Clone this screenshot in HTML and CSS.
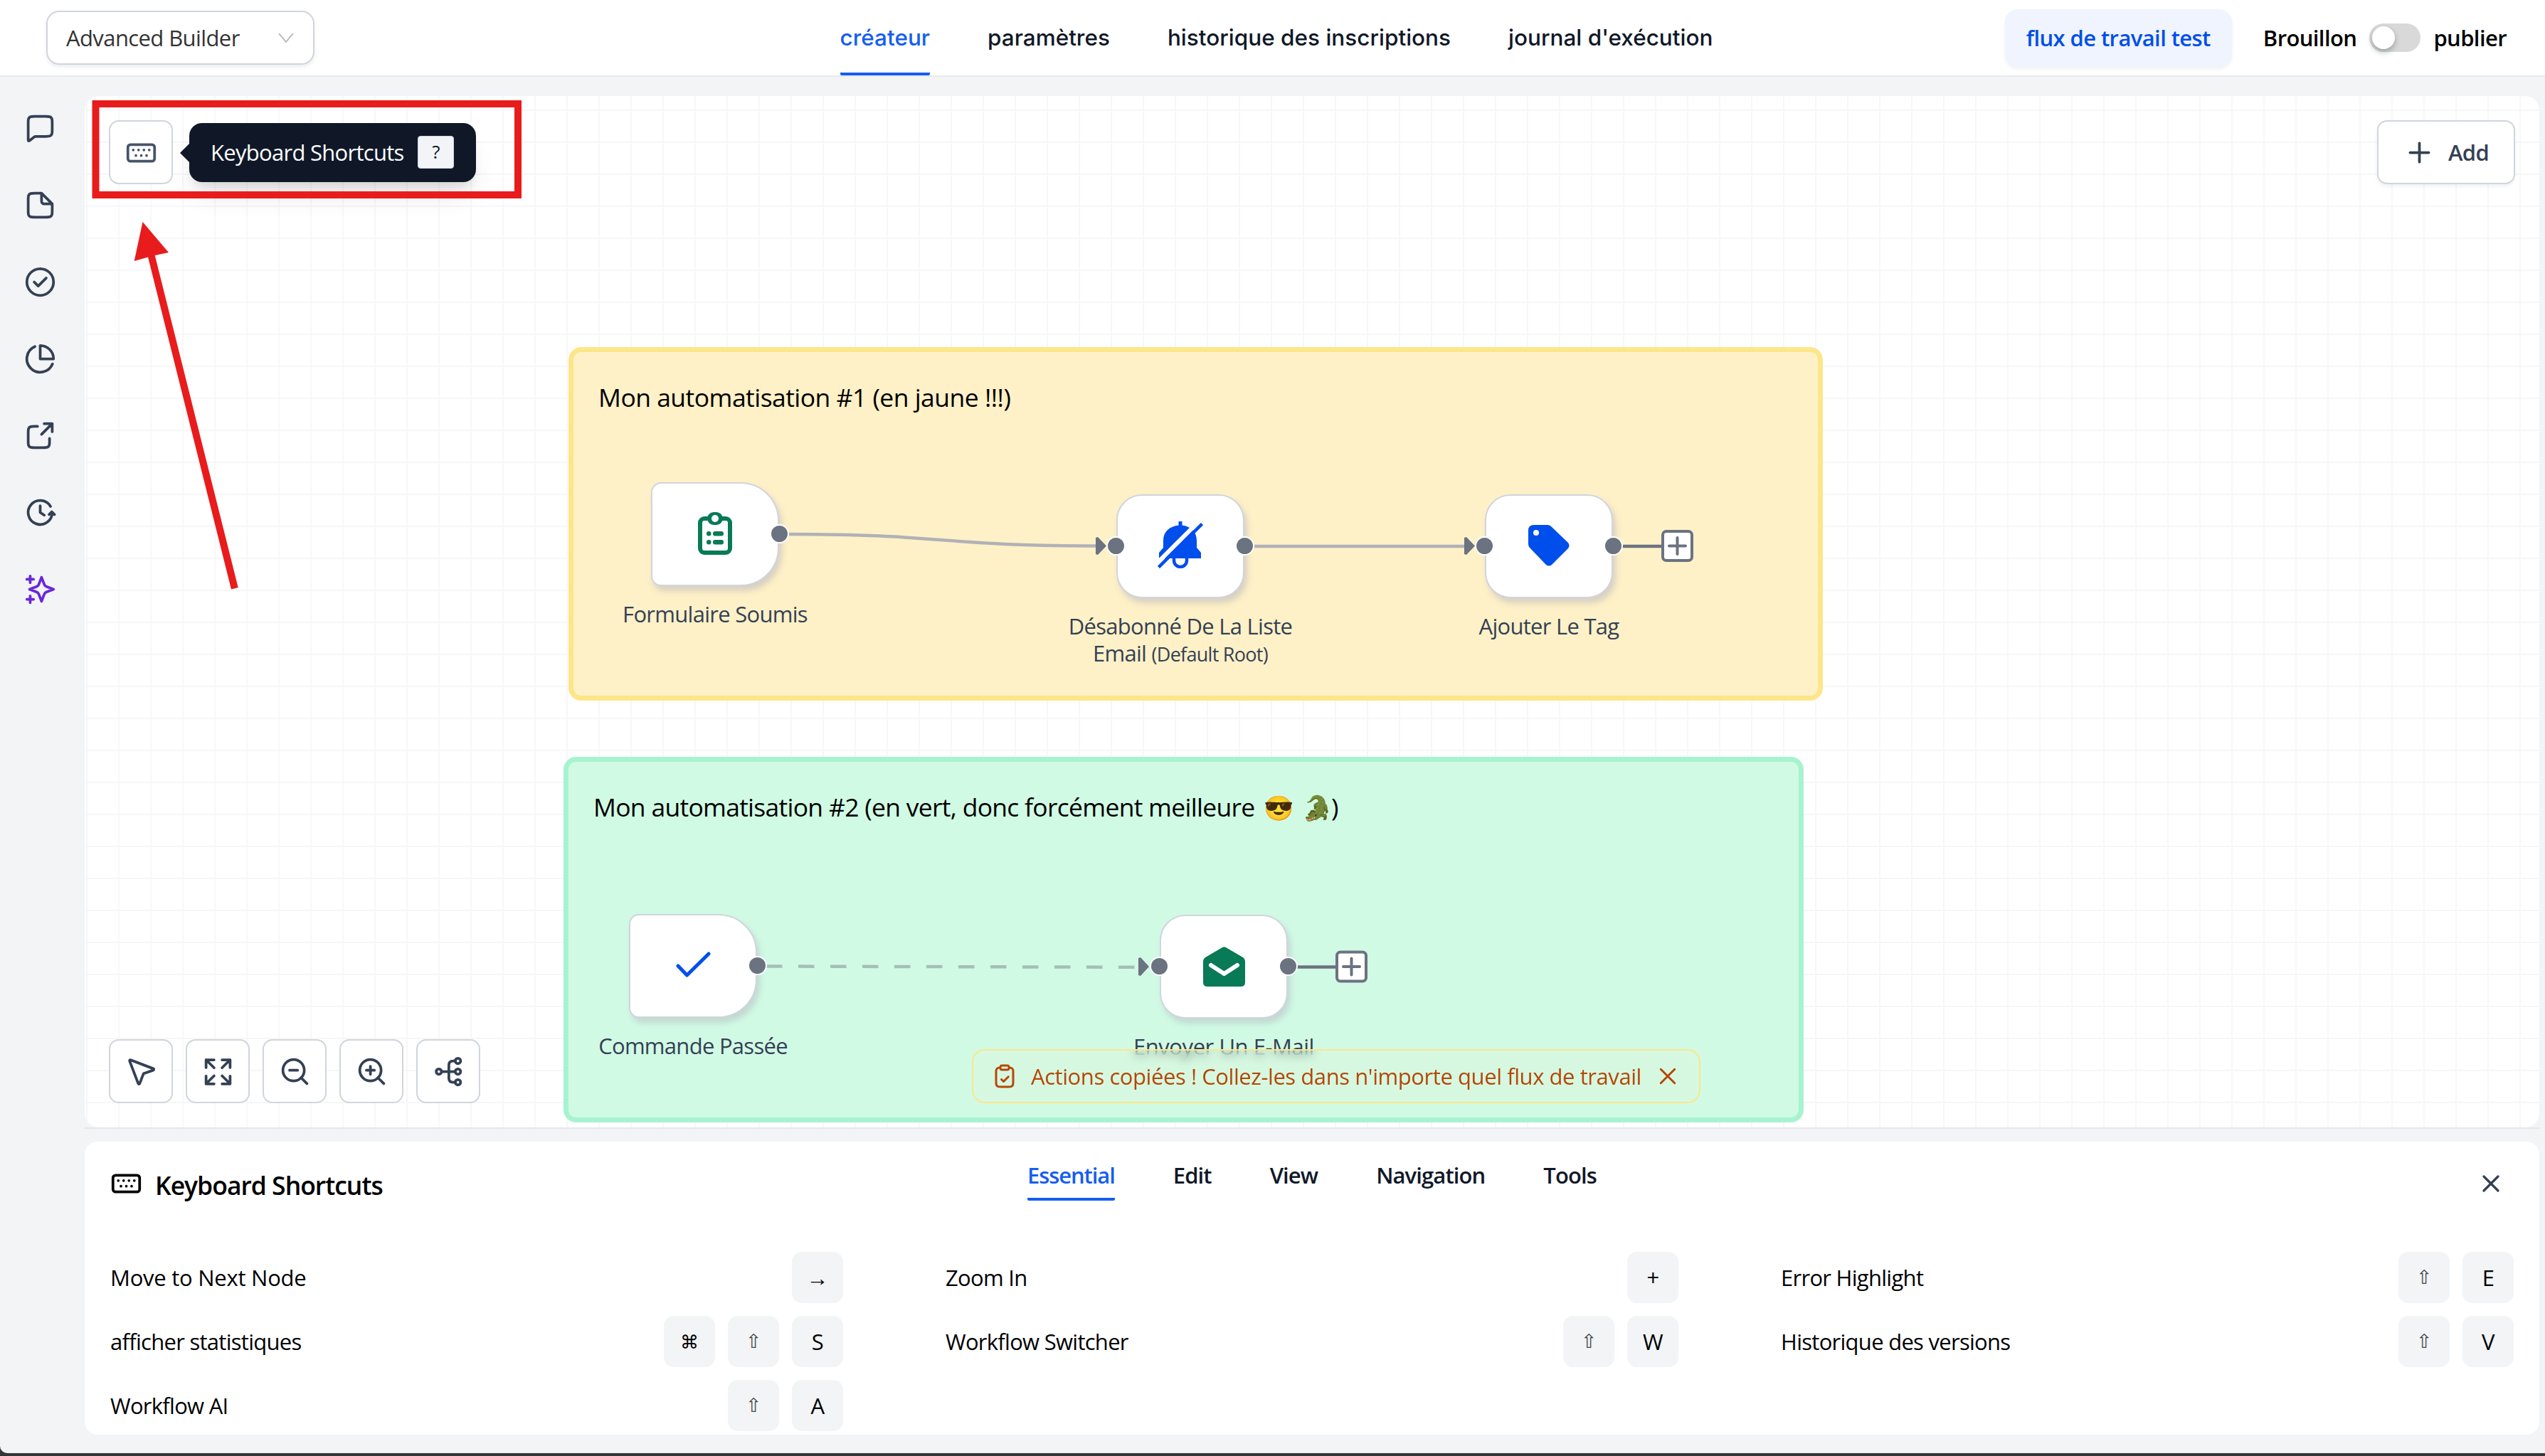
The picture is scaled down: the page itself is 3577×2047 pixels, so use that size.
FILE: index.html
```
<!DOCTYPE html>
<html lang="fr">
	<head>
		<meta charset="UTF-8" />
		<meta name="viewport" content="width=device-width, initial-scale=1.0" />
		<title>Advanced Builder</title>
		<link rel="stylesheet" href="styles.css">
	</head>
	<body>
		<div class="app">
			<header class="topbar">
				<div class="select">
					<span>Advanced Builder</span>
					<svg class="chevron" viewBox="0 0 24 14"><path d="M2 1l10 12L22 1" /></svg>
				</div>
				<nav class="tabs">
					<a class="tab active">créateur</a>
					<a class="tab">paramètres</a>
					<a class="tab">historique des inscriptions</a>
					<a class="tab">journal d'exécution</a>
				</nav>
				<div class="actions">
					<button class="test-btn">flux de travail test</button>
					<span class="state">Brouillon</span>
					<span class="toggle"></span>
					<span class="state">publier</span>
				</div>
			</header>

			<div class="layout">
				<aside class="sidebar">
					<svg class="icon" viewBox="0 0 24 24"><path d="M3 7.8c0-1.68 0-2.52.327-3.162a3 3 0 0 1 1.311-1.311C5.28 3 6.12 3 7.8 3h8.4c1.68 0 2.52 0 3.162.327a3 3 0 0 1 1.311 1.311C21 5.28 21 6.12 21 7.8v5.4c0 1.68 0 2.52-.327 3.162a3 3 0 0 1-1.311 1.311C18.72 18 17.88 18 16.2 18H9.684c-.624 0-.936 0-1.235.061a3 3 0 0 0-.74.26c-.273.138-.516.333-1.004.723l-2.385 1.908c-.416.333-.624.499-.799.5a.5.5 0 0 1-.392-.189C3 21.126 3 20.86 3 20.327z" /></svg>
					<svg class="icon" viewBox="0 0 24 24"><path d="M13 3H7.800C6.120 3 5.280 3 4.638 3.327a3 3 0 0 0-1.311 1.311C3 5.280 3 6.120 3 7.800v8.400c0 1.680 0 2.520.327 3.162a3 3 0 0 0 1.311 1.311C5.280 21 6.120 21 7.800 21h8.400c1.680 0 2.520 0 3.162-.327a3 3 0 0 0 1.311-1.311C21 18.720 21 17.880 21 16.200V11zM13 3v4.800c0 1.120 0 1.680.218 2.108a2 2 0 0 0 .874.874C14.520 11 15.080 11 16.200 11H21z" /></svg>
					<svg class="icon" viewBox="0 0 24 24"><circle cx="12" cy="12" r="10" /><path d="M7.500 12l3 3 6-6" /></svg>
					<svg class="icon" viewBox="0 0 24 24"><path d="M21.210 15.890A10 10 0 1 1 8 2.830M22 12A10 10 0 0 0 12 2v10z" /></svg>
					<svg class="icon" viewBox="0 0 24 24"><path d="M21 9V3h-6M21 3l-8 8M10 5H7.800C6.120 5 5.280 5 4.638 5.327a3 3 0 0 0-1.311 1.311C3 7.280 3 8.120 3 9.800v6.400c0 1.680 0 2.520.327 3.162a3 3 0 0 0 1.311 1.311C5.280 21 6.120 21 7.800 21h6.400c1.680 0 2.520 0 3.162-.327a3 3 0 0 0 1.311-1.311C19 18.720 19 17.880 19 16.200V14" /></svg>
					<svg class="icon" viewBox="0 0 24 24"><path d="M22.700 13.500l-2-2-2 2M21 12a9 9 0 1 1-1.250-4.570M12 7v5l3 2" /></svg>
					<svg class="icon ai" viewBox="0 0 24 24"><path d="M4.500 22v-5M4.500 7V2M2 4.500h5M2 19.500h5M13 3l-1.734 4.509c-.282.733-.423 1.100-.643 1.408a3 3 0 0 1-.706.706c-.308.220-.675.361-1.408.643L4 12l4.509 1.734c.733.282 1.100.423 1.408.643a3 3 0 0 1 .706.706c.220.308.361.675.643 1.408L13 21l1.734-4.509c.282-.733.423-1.100.643-1.408a3 3 0 0 1 .706-.706c.308-.220.675-.361 1.408-.643L22 12l-4.509-1.734c-.733-.282-1.100-.423-1.408-.643a3 3 0 0 1-.706-.706c-.220-.308-.361-.675-.643-1.408z" /></svg>
				</aside>

				<main class="content">
					<div class="canvas-wrap">
						<div class="canvas">
							<div class="group yellow">Mon automatisation #1 (en jaune !!!)</div>
							<div class="group green">Mon automatisation #2 (en vert, donc forcément meilleure <span class="emoji">😎</span> <span class="emoji">🐊</span>)</div>

							<svg class="edges" viewBox="119 135 3450 1450">
								<path class="edge on-yellow" d="M1109 751C1325 751 1325 767.500 1541 767.500" />
								<path class="edge on-yellow" d="M1762 768H2060" />
								<path class="edge on-green" d="M1077 1358.500L1600 1359.800" />
								<path class="head" d="M1540 756l3-1 12 12.500-12 12.500-3-1z" />
								<path class="head" d="M2058 756l3-1 12 12.500-12 12.500-3-1z" />
								<path class="head" d="M1600 1347l3-1 12 13-12 13-3-1z" />
								<path class="stub" d="M2278 768h58M1822 1359.500h56" />
								<g class="add-node">
									<rect x="2337" y="747" width="41" height="41" rx="5" />
									<path d="M2346 767.500h23M2357.500 756v23" />
									<rect x="1879" y="1338.500" width="41" height="41" rx="5" />
									<path d="M1888 1359h23M1899.500 1347.500v23" />
								</g>
							</svg>

							<div class="node form">
								<div class="box trigger">
									<svg class="form-icon" viewBox="0 0 48 60">
										<rect class="frame" x="3" y="9" width="42" height="48" rx="6" />
										<rect x="13" y="0" width="22" height="18" rx="9" />
										<circle class="hole" cx="24" cy="9" r="5" />
										<rect x="12" y="27" width="6.500" height="6.500" rx="3" /><rect x="21" y="27" width="15" height="6.500" rx="3" />
										<rect x="12" y="39" width="6.500" height="6.500" rx="3" /><rect x="21" y="39" width="15" height="6.500" rx="3" />
									</svg>
									<i class="handle out"></i>
								</div>
								<div class="label">Formulaire Soumis</div>
							</div>
							<div class="node unsub">
								<div class="box">
									<svg class="bell-icon" viewBox="0 0 64 66">
										<path d="M29.500 0h5v5.500C46 7 55 14 55 27v10l6 7v8H2v-8l6-7V27C8 14 17 7 29.500 5.500z" />
										<path class="clapper" d="M23 52v3a9 9 0 0 0 18 0v-3" />
										<path class="gap" d="M54 4L-2 60" />
										<path class="slash" d="M62.500 3.500L1.500 64.500" />
									</svg>
									<i class="handle in"></i>
									<i class="handle out"></i>
								</div>
								<div class="label">Désabonné De La Liste<br>Email <small>(Default Root)</small></div>
							</div>
							<div class="node tag">
								<div class="box">
									<svg class="tag-icon" viewBox="0 0 58 58">
										<path d="M8 0h19q3 0 5 2l24 23q3 4 0 8L33 56q-4 3-8 0L2 32q-2-2-2-5V8q0-8 8-8z" />
										<circle class="hole" cx="11" cy="11" r="4" />
									</svg>
									<i class="handle in"></i>
									<i class="handle out"></i>
								</div>
								<div class="label">Ajouter Le Tag</div>
							</div>
							<div class="node order">
								<div class="box trigger">
									<svg class="check-icon" viewBox="0 0 49 38"><path d="M3 20l12.500 13L46 3" /></svg>
									<i class="handle out"></i>
								</div>
								<div class="label">Commande Passée</div>
							</div>
							<div class="node email">
								<div class="box">
									<svg class="mail-icon" viewBox="0 0 59 56">
										<path d="M27 1q2.500-1.500 5 0l24 14q3 2 3 5v30q0 6-6 6H6q-6 0-6-6V20q0-3 3-5z" />
										<path class="flap" d="M11 26l18.500 12L48 26" />
									</svg>
									<i class="handle in"></i>
									<i class="handle out"></i>
								</div>
								<div class="label">Envoyer Un E-Mail</div>
							</div>

							<div class="toast">
								<svg class="icon" viewBox="0 0 24 24"><path d="M16 4c.930 0 1.395 0 1.777.102a3 3 0 0 1 2.121 2.121C20 6.605 20 7.070 20 8v9.200c0 1.680 0 2.520-.327 3.162a3 3 0 0 1-1.311 1.311C17.720 22 16.880 22 15.200 22H8.800c-1.680 0-2.520 0-3.162-.327a3 3 0 0 1-1.311-1.311C4 19.720 4 18.880 4 17.200V8c0-.930 0-1.395.102-1.777a3 3 0 0 1 2.121-2.121C6.605 4 7.070 4 8 4M9 15l2 2 4.500-4.500M9.600 6h4.800c.900 0 1.600 0 1.600-1.600V3.600C16 2 15.300 2 14.400 2H9.600C8.700 2 8 2 8 3.600v.8C8 6 8.700 6 9.600 6z" /></svg>
								<span>Actions copiées ! Collez-les dans n'importe quel flux de travail</span>
								<svg class="icon" viewBox="0 0 24 24"><path d="M18.500 5.500l-13 13M5.500 5.500l13 13" /></svg>
							</div>

							<div class="tools top">
								<button class="tool">
									<svg class="icon kb" viewBox="0 0 24 24"><rect x="2" y="6" width="20" height="12.500" rx="2" /><path d="M6 10h.010M10 10h.010M14 10h.010M18 10h.010M8 14.200h.010M12 14.200h.010M16 14.200h.010" /></svg>
								</button>
								<div class="tooltip">Keyboard Shortcuts <kbd>?</kbd></div>
							</div>
							<button class="add-btn">
								<svg class="icon" viewBox="0 0 24 24"><path d="M12 5v14M5 12h14" /></svg>
								Add
							</button>
							<div class="tools bottom">
								<button class="tool"><svg class="icon" viewBox="0 0 24 24"><path d="M3.300 4.100c-.200-.500.300-1 .8-.8l16.900 6.500c.600.200.600 1 0 1.200l-6.700 2.300c-.400.100-.700.400-.8.800l-2.600 6.800c-.2.600-1 .600-1.200 0z" /></svg></button>
								<button class="tool"><svg class="icon" viewBox="0 0 24 24"><path d="M3 9V3.200h6M3 3.200l6 6M15 3.200h6V9M21 3.200l-6 6M3 15.400v5.800h6M3 21.200l6-6M15 21.200h6v-5.800M21 21.200l-6-6" /></svg></button>
								<button class="tool"><svg class="icon" viewBox="0 0 24 24"><circle cx="11" cy="11" r="8" /><path d="M21 21l-4.350-4.350M8 11h6" /></svg></button>
								<button class="tool"><svg class="icon" viewBox="0 0 24 24"><circle cx="11" cy="11" r="8" /><path d="M21 21l-4.350-4.350M8 11h6M11 8v6" /></svg></button>
								<button class="tool"><svg class="icon" viewBox="0 0 24 24"><circle cx="4.700" cy="12" r="2" /><circle cx="19" cy="4" r="2" /><circle cx="19" cy="12" r="2" /><circle cx="19" cy="20" r="2" /><path d="M6.700 12H17M17 4h-1.500c-2 0-3.300 1-3.300 3v10c0 2 1.300 3 3.300 3H17" /></svg></button>
							</div>

							<svg class="marks" viewBox="119 135 3450 1450">
								<rect x="134.500" y="146" width="593.500" height="128" />
								<path d="M200.500 312L237 355l-19.300 4L334.700 826l-9.700 2.500L208 361.500 188.700 367z" />
							</svg>
						</div>
					</div>

					<section class="panel">
						<div class="panel-head">
							<h2>
								<svg class="icon kb" viewBox="0 0 24 24"><rect x="2" y="6" width="20" height="12.500" rx="2" /><path d="M6 10h.010M10 10h.010M14 10h.010M18 10h.010M8 14.200h.010M12 14.200h.010M16 14.200h.010" /></svg>
								Keyboard Shortcuts
							</h2>
							<nav class="panel-tabs">
								<a class="active">Essential</a>
								<a>Edit</a>
								<a>View</a>
								<a>Navigation</a>
								<a>Tools</a>
							</nav>
							<svg class="icon close" viewBox="0 0 24 24"><path d="M18 6L6 18M6 6l12 12" /></svg>
						</div>
						<div class="shortcuts">
							<div class="row"><span class="wide">Move to Next Node</span><kbd>→</kbd></div>
							<div class="row"><span>Zoom In</span><kbd>+</kbd></div>
							<div class="row"><span>Error Highlight</span><kbd class="shift">⇧</kbd><kbd>E</kbd></div>
							<div class="row"><span>afficher statistiques</span><kbd class="cmd">⌘</kbd><kbd class="shift">⇧</kbd><kbd>S</kbd></div>
							<div class="row"><span>Workflow Switcher</span><kbd class="shift">⇧</kbd><kbd>W</kbd></div>
							<div class="row"><span>Historique des versions</span><kbd class="shift">⇧</kbd><kbd>V</kbd></div>
							<div class="row"><span>Workflow AI</span><kbd class="shift">⇧</kbd><kbd>A</kbd></div>
						</div>
					</section>
				</main>
			</div>
		</div>
	</body>
</html>
```
FILE: styles.css
```
* {
	box-sizing: border-box;
}
body {
	margin: 0;
	height: 2047px;
	background: #333634;
	font-family: "Open Sans", "Noto Sans", sans-serif;
	font-size: 31px;
	letter-spacing: -0.72px;
	line-height: 38px;
	color: #000;
	overflow: hidden;
}
button,
kbd {
	font: inherit;
	letter-spacing: inherit;
}
button {
	padding: 0;
}
.app {
	display: flex;
	flex-direction: column;
	height: 2043px;
	background: #f2f4f6;
	border-bottom-left-radius: 10px;
	overflow: hidden;
}
.icon {
	width: 45px;
	height: 45px;
	flex: none;
	fill: none;
	stroke: #344054;
	stroke-width: 2;
	stroke-linecap: round;
	stroke-linejoin: round;
}

/* top bar */
.topbar {
	display: grid;
	grid-template-columns: 1fr auto 1fr;
	align-items: center;
	height: 108px;
	flex: none;
	padding: 0 54px 0 65px;
	background: #fff;
	border-bottom: 2px solid #e8eaed;
}
.select {
	display: flex;
	align-items: center;
	justify-content: space-between;
	width: 377px;
	height: 76px;
	padding: 0 26px;
	border: 2px solid #d0d5dd;
	border-radius: 18px;
	box-shadow: 0 3px 5px rgba(16, 24, 40, 0.08);
	color: #333;
	letter-spacing: -0.6px;
}
.chevron {
	width: 24px;
	height: 14px;
	fill: none;
	stroke: #bfbfbf;
	stroke-width: 2;
}
.tabs {
	display: flex;
	gap: 81px;
	height: 106px;
	font-family: Inter, sans-serif;
	font-size: 31.5px;
	font-weight: 500;
	letter-spacing: 0;
}
.tab {
	display: flex;
	align-items: center;
	border-top: 4px solid transparent;
	border-bottom: 4px solid transparent;
	border-radius: 2px;
	color: #101828;
}
.tab.active {
	color: #155eef;
	border-bottom-color: #155eef;
}
.actions {
	display: flex;
	align-items: center;
	justify-content: flex-end;
	font-weight: 600;
	letter-spacing: -0.6px;
}
.test-btn {
	width: 319px;
	height: 81px;
	margin-right: 44px;
	border: 0;
	border-radius: 18px;
	background: #eff4ff;
	box-shadow: 0 3px 5px rgba(16, 24, 40, 0.06);
	color: #004eeb;
	font-weight: 600;
}
.toggle {
	width: 72px;
	height: 40px;
	margin: 0 18px;
	padding: 4px;
	border-radius: 20px;
	background: #d9d9d9;
}
.toggle::before {
	content: "";
	display: block;
	width: 32px;
	height: 32px;
	border-radius: 50%;
	background: #fff;
	box-shadow: 0 4px 8px rgba(0, 35, 11, 0.3);
}

/* sidebar */
.layout {
	display: flex;
	flex: 1;
	min-height: 0;
}
.sidebar {
	display: flex;
	flex-direction: column;
	gap: 63px;
	width: 119px;
	padding: 50px 0 0 34px;
}
.sidebar .ai {
	stroke: #6927da;
}
.content {
	flex: 1;
	display: flex;
	flex-direction: column;
	padding: 27px 8px 26px 0;
}

/* canvas */
.canvas-wrap {
	border-bottom: 2px solid #e5e7eb;
}
.canvas {
	position: relative;
	height: 1450px;
	border-radius: 20px;
	overflow: hidden;
	background-color: #fff;
	background-image:
		linear-gradient(to right, #f7f7f7 2px, transparent 2px),
		linear-gradient(to bottom, #f7f7f7 2px, transparent 2px);
	background-size: 45px 45px;
	background-position: 2px 19px;
}
.group {
	position: absolute;
	padding: 39px 35px;
	border: 7px solid;
	border-radius: 18px;
	font-size: 35.5px;
	line-height: 48px;
	letter-spacing: -0.53px;
}
.group.yellow {
	left: 680px;
	top: 353px;
	width: 1763px;
	height: 497px;
	background: #fef1c7;
	border-color: #fde68a;
}
.group.green {
	left: 673px;
	top: 929px;
	width: 1743px;
	height: 514px;
	background: #d1fae5;
	border-color: #a7f3d0;
	letter-spacing: -0.72px;
}
.emoji {
	font-size: 34px;
	margin-left: 4px;
}
.edges,
.marks {
	position: absolute;
	inset: 0;
	width: 3450px;
	height: 1450px;
	fill: none;
}
.marks {
	pointer-events: none;
}
.marks rect {
	stroke: #e81c1c;
	stroke-width: 10;
}
.marks path {
	fill: #e81c1c;
}
.edge {
	stroke-width: 4.5;
}
.on-yellow {
	stroke: #b1b1b7;
}
.on-green {
	stroke: #a4bfb6;
	stroke-dasharray: 22.5 22.5;
}
.head {
	fill: #6b7280;
}
.stub {
	stroke: #6b7280;
	stroke-width: 4.5;
}
.add-node {
	fill: #fff;
	stroke: #6b7280;
	stroke-width: 4;
	stroke-linecap: round;
}

/* nodes */
.node {
	position: absolute;
	width: 360px;
	text-align: center;
	color: #344054;
}
.node.form {
	left: 706px;
	top: 543px;
}
.node.unsub {
	left: 1360px;
	top: 560px;
}
.node.tag {
	left: 1878px;
	top: 560px;
}
.node.order {
	left: 675px;
	top: 1150px;
}
.node.email {
	left: 1421px;
	top: 1151px;
	letter-spacing: -0.45px;
}
.box {
	position: relative;
	display: flex;
	align-items: center;
	justify-content: center;
	width: 180px;
	height: 146px;
	margin: 0 auto 20px;
	background: #fff;
	border: 2px solid #d0d5dd;
	border-radius: 36px;
	box-shadow: 4px 7px 9px rgba(105, 112, 180, 0.25);
}
.box.trigger {
	border-radius: 14px 54px 54px 14px;
}
.order .box,
.email .box {
	box-shadow: 4px 7px 9px rgba(140, 100, 140, 0.22);
}
.handle {
	position: absolute;
	top: 57px;
	width: 27px;
	height: 27px;
	border: 2px solid #fff;
	border-radius: 50%;
	background: #6b7280;
}
.handle.in {
	left: -16px;
}
.handle.out {
	right: -16px;
}
.label small {
	font-size: 27px;
}
.hole {
	fill: #fff;
}
.form-icon {
	width: 48px;
	height: 60px;
	margin-top: -2px;
	fill: #087a55;
}
.form-icon .frame {
	fill: none;
	stroke: #087a55;
	stroke-width: 6;
}
.bell-icon {
	width: 64px;
	height: 66px;
	margin-top: -5px;
	fill: #004eeb;
}
.bell-icon .clapper {
	fill: none;
	stroke: #004eeb;
	stroke-width: 4.5;
}
.bell-icon .gap {
	stroke: #fff;
	stroke-width: 6;
}
.bell-icon .slash {
	stroke: #004eeb;
	stroke-width: 4.5;
}
.tag-icon {
	width: 58px;
	height: 58px;
	margin-top: -2px;
	fill: #004eeb;
}
.check-icon {
	width: 49px;
	height: 38px;
	margin-top: -2px;
	fill: none;
	stroke: #004eeb;
	stroke-width: 5;
	stroke-linecap: round;
	stroke-linejoin: round;
}
.mail-icon {
	width: 59px;
	height: 56px;
	fill: #087a55;
}
.mail-icon .flap {
	fill: none;
	stroke: #fff;
	stroke-width: 6;
	stroke-linecap: round;
	stroke-linejoin: round;
}

/* floating controls */
.toast {
	position: absolute;
	left: 1247px;
	top: 1340px;
	display: flex;
	align-items: center;
	justify-content: space-between;
	width: 1024px;
	height: 76px;
	padding: 0 26px;
	border: 2px solid #fde68a;
	border-radius: 18px;
	background: rgba(255, 240, 190, 0.12);
	backdrop-filter: blur(7px);
	color: #b54708;
	letter-spacing: -0.43px;
	white-space: nowrap;
}
.toast .icon {
	width: 36px;
	height: 36px;
	stroke: #b54708;
}
.tools {
	position: absolute;
	left: 34px;
	display: flex;
	align-items: center;
	gap: 18px;
}
.tools.top {
	top: 34px;
	gap: 23px;
}
.tools.bottom {
	top: 1326px;
}
.tool,
.add-btn {
	display: flex;
	align-items: center;
	justify-content: center;
	width: 90px;
	height: 90px;
	background: #fff;
	border: 2px solid #d0d5dd;
	border-radius: 14px;
}
.tools.top .icon {
	stroke: #475467;
}
.add-btn {
	position: absolute;
	right: 34px;
	top: 34px;
	gap: 18px;
	width: 194px;
	box-shadow: 0 3px 5px rgba(16, 24, 40, 0.06);
	color: #344054;
	font-weight: 600;
}
.tooltip {
	position: relative;
	display: flex;
	align-items: center;
	justify-content: space-between;
	width: 403px;
	height: 83px;
	padding: 0 31px 0 30px;
	border-radius: 18px;
	background: #101828;
	box-shadow: 0 27px 36px -9px rgba(0, 0, 0, 0.1), 0 9px 14px -5px rgba(0, 0, 0, 0.1);
	color: #fff;
	white-space: nowrap;
}
.tooltip::before {
	content: "";
	position: absolute;
	left: -13px;
	top: 28px;
	border: solid transparent;
	border-width: 14px 14px 14px 0;
	border-right-color: #101828;
}
.tooltip kbd {
	width: 51px;
	height: 46px;
	border: 1px solid #d0d5dd;
	border-radius: 4px;
	background: #f2f4f7;
	color: #101828;
	font-size: 26px;
	line-height: 43px;
	text-align: center;
}

/* shortcuts panel */
.panel {
	flex: 1;
	margin-top: 18px;
	padding: 0 36px;
	background: #fff;
	border-radius: 18px;
}
.panel-head {
	display: grid;
	grid-template-columns: 1fr auto 1fr;
	height: 155px;
	padding-top: 28px;
}
.panel h2 {
	display: flex;
	align-items: center;
	gap: 18px;
	height: 66px;
	margin: 0;
	font-size: 35.5px;
	font-weight: 600;
	letter-spacing: -1px;
}
.panel h2 .icon {
	margin-top: -5px;
	stroke: #000;
}
.panel-tabs {
	display: flex;
	gap: 82px;
	height: 55px;
	font-weight: 600;
	letter-spacing: -0.9px;
	color: #101828;
}
.panel-tabs a {
	border-bottom: 4px solid transparent;
	border-radius: 2px;
}
.panel-tabs .active {
	color: #155eef;
	border-bottom-color: #155eef;
	letter-spacing: -1.1px;
}
.panel-head .close {
	justify-self: end;
	width: 40px;
	height: 40px;
	margin: 11px 12px 0 0;
}
.shortcuts {
	display: grid;
	grid-template-columns: repeat(3, 1fr);
	gap: 18px 144px;
}
.row {
	display: flex;
	align-items: center;
	gap: 18px;
}
.row span {
	flex: 1;
}
.row .wide {
	letter-spacing: -0.25px;
}
.row kbd {
	width: 72px;
	height: 72px;
	border-radius: 14px;
	background: #f2f4f6;
	line-height: 72px;
	text-align: center;
}
.row .shift {
	font-family: "DejaVu Sans", sans-serif;
	font-size: 27px;
	color: #444;
}
.row .cmd {
	font-size: 26px;
}
```
